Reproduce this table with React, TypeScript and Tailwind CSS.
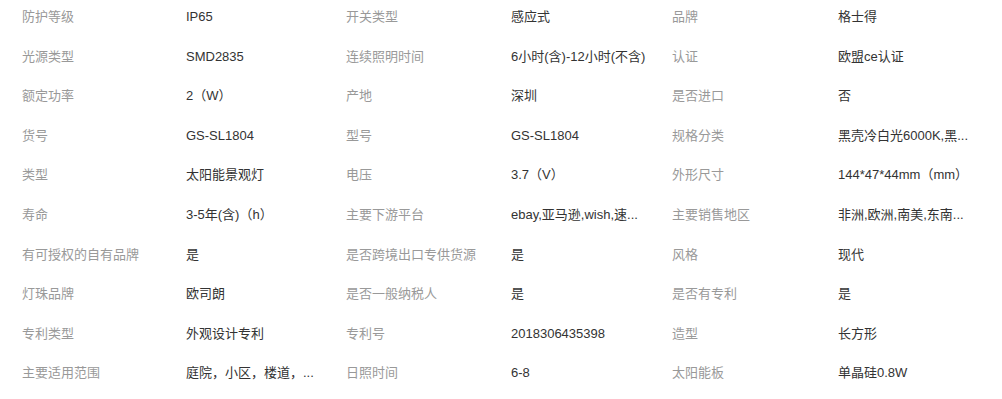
const rows: [string, string, string, string, string, string][] = [
  ["防护等级", "IP65", "开关类型", "感应式", "品牌", "格士得"],
  ["光源类型", "SMD2835", "连续照明时间", "6小时(含)-12小时(不含)", "认证", "欧盟ce认证"],
  ["额定功率", "2（W）", "产地", "深圳", "是否进口", "否"],
  ["货号", "GS-SL1804", "型号", "GS-SL1804", "规格分类", "黑壳冷白光6000K,黑..."],
  ["类型", "太阳能景观灯", "电压", "3.7（V）", "外形尺寸", "144*47*44mm（mm）"],
  ["寿命", "3-5年(含)（h）", "主要下游平台", "ebay,亚马逊,wish,速...", "主要销售地区", "非洲,欧洲,南美,东南..."],
  ["有可授权的自有品牌", "是", "是否跨境出口专供货源", "是", "风格", "现代"],
  ["灯珠品牌", "欧司朗", "是否一般纳税人", "是", "是否有专利", "是"],
  ["专利类型", "外观设计专利", "专利号", "2018306435398", "造型", "长方形"],
  ["主要适用范围", "庭院，小区，楼道，...", "日照时间", "6-8", "太阳能板", "单晶硅0.8W"],
];

export default function App() {
  return (
    <div
      className="w-[1002px] h-[399px] overflow-hidden bg-white text-[13px]"
      style={{ fontFamily: '"Liberation Sans", "Noto Sans CJK SC", sans-serif' }}
    >
      <div className="-mt-[3px] pl-[22px] grid grid-cols-[164px_160px_165px_161px_166px_160px] auto-rows-[39.6px]">
        {rows.map((r, i) =>
          r.map((c, j) => (
            <div
              key={`${i}-${j}`}
              className={`flex items-center whitespace-nowrap ${
                j % 2 === 0 ? "text-[#999999]" : "text-[#333333]"
              }`}
            >
              {c}
            </div>
          ))
        )}
      </div>
    </div>
  );
}
